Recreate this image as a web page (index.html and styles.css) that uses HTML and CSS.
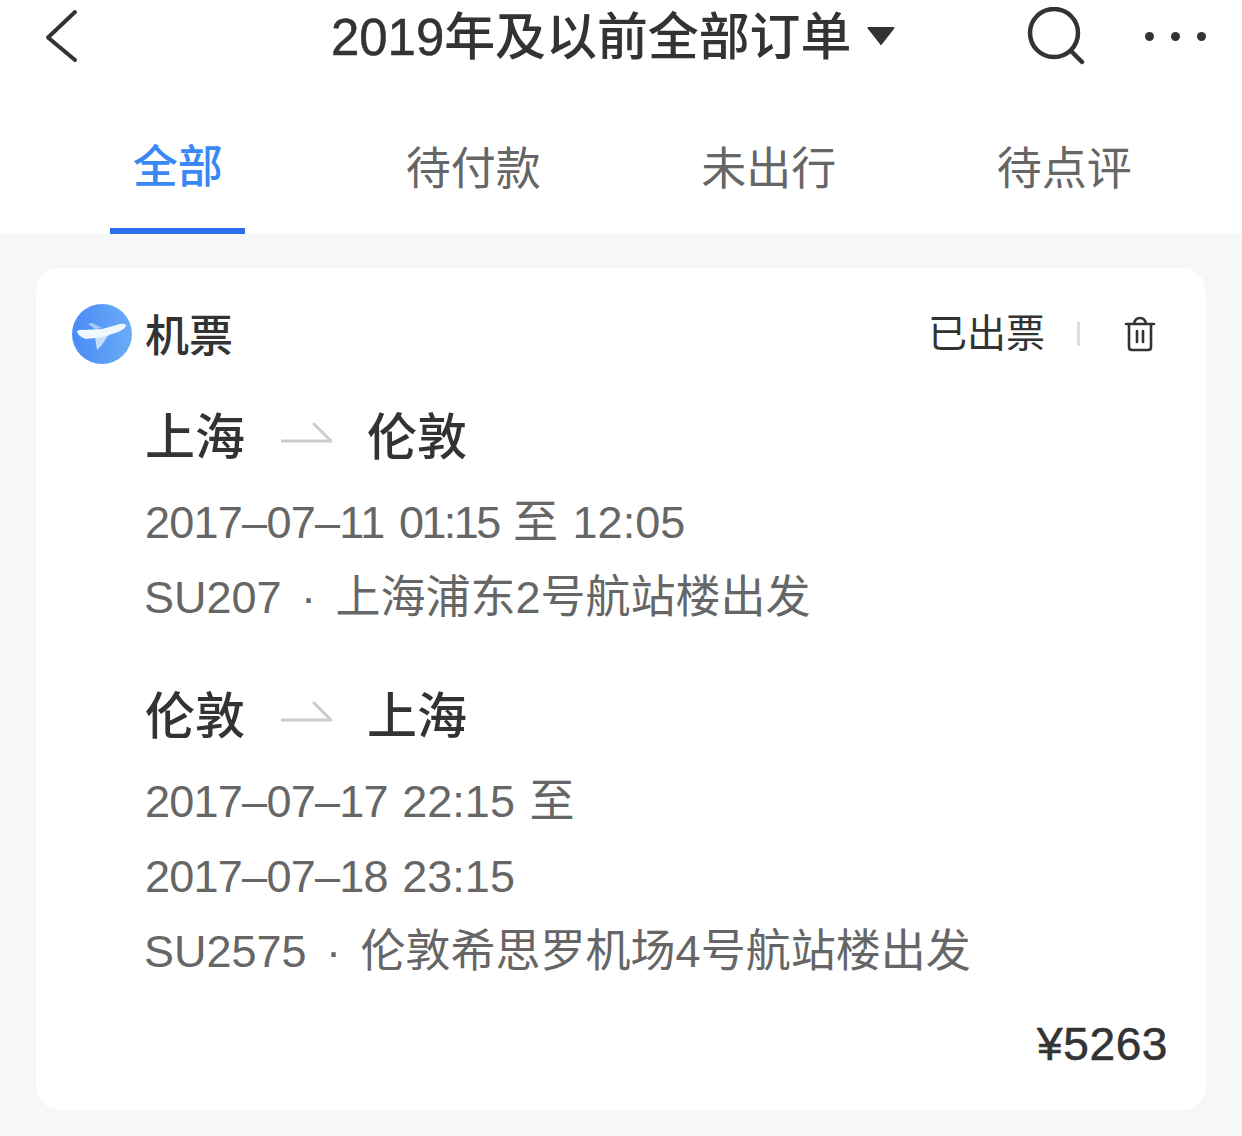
FILE: index.html
```html
<!DOCTYPE html>
<html lang="zh-CN">
<head>
<meta charset="utf-8">
<title>2019年及以前全部订单</title>
<link rel="stylesheet" href="styles.css">
</head>
<body>
<header class="topbar">
  <svg class="icon-back" width="36" height="54" viewBox="0 0 36 54"><path d="M31 3 L4 28.500 L31 51" fill="none" stroke="#333" stroke-width="4" stroke-linecap="round" stroke-linejoin="round"/></svg>
  <div class="title"><span><span class="year">2019</span>年及以前全部订单</span><svg class="caret" width="28" height="18" viewBox="0 0 28 18"><path d="M1.500 1 H26.500 L14 17 Z" fill="#333" stroke="#333" stroke-width="2" stroke-linejoin="round"/></svg></div>
  <svg class="icon-search" width="58" height="58" viewBox="0 0 58 58"><circle cx="27" cy="26" r="24" fill="none" stroke="#333" stroke-width="4.500"/><path d="M44 44 L55 55" stroke="#333" stroke-width="4.500" stroke-linecap="round"/></svg>
  <div class="dots"><i></i><i></i><i></i></div>
</header>
<nav class="tabs">
  <div class="tab active">全部</div>
  <div class="tab">待付款</div>
  <div class="tab">未出行</div>
  <div class="tab">待点评</div>
</nav>
<main class="list">
  <section class="card">
    <div class="card-head">
      <div class="badge">
        <svg width="60" height="60" viewBox="0 0 60 60">
          <defs><linearGradient id="g" x1="0" x2="1" y1="0" y2="0"><stop offset="0" stop-color="#4a8cf7"/><stop offset="1" stop-color="#69acf6"/></linearGradient></defs>
          <circle cx="30" cy="30" r="30" fill="url(#g)"/>
          <path d="M16 20 L20 19 L30 24 L23 25 Z" fill="#a9cbf8"/>
          <path d="M23 33 L37 30 L30 41 L25 46 Z" fill="#c6def9"/>
          <path d="M5 28 Q6 25 12 26 L30 25 L48 20 Q54 19 54 22 Q53 25 46 28 L31 33 L14 35 Q7 33 5 28 Z" fill="#f1f7fe"/>
        </svg>
      </div>
      <h2 class="kind">机票</h2>
      <div class="status">已出票</div>
      <span class="divider"></span>
      <svg class="icon-trash" width="32" height="36" viewBox="0 0 32 36"><path d="M2 8 H30 M5 8 V31 Q5 34 8 34 H24 Q27 34 27 31 V8 M10 8 Q11 2 16 2 Q21 2 22 8 M13 15 V26 M19 15 V26" fill="none" stroke="#333" stroke-width="2.600" stroke-linecap="round" stroke-linejoin="round"/></svg>
    </div>
    <div class="trip">
      <div class="route"><span>上海</span><svg class="arrow" width="52" height="22" viewBox="0 0 52 22"><path d="M1 19 H50 L33 2" fill="none" stroke="#ccc" stroke-width="3" stroke-linecap="round" stroke-linejoin="round"/></svg><span>伦敦</span></div>
      <p class="info"><span class="d">2017–07–11</span> <span class="t-tight">01:15</span> 至 12:05</p>
      <p class="info flight">SU207 · 上海浦东2号航站楼出发</p>
    </div>
    <div class="trip">
      <div class="route"><span>伦敦</span><svg class="arrow" width="52" height="22" viewBox="0 0 52 22"><path d="M1 19 H50 L33 2" fill="none" stroke="#ccc" stroke-width="3" stroke-linecap="round" stroke-linejoin="round"/></svg><span>上海</span></div>
      <p class="info"><span class="d">2017–07–17</span> <span class="t">22:15</span> 至</p>
      <p class="info"><span class="d">2017–07–18</span> <span class="t">23:15</span></p>
      <p class="info flight">SU2575 · 伦敦希思罗机场4号航站楼出发</p>
    </div>
    <div class="price">¥5263</div>
  </section>
</main>
</body>
</html>
```
FILE: styles.css
```css
* { box-sizing: border-box; }
html, body { margin: 0; height: 100%; }
body {
  background: #f7f7f7;
  color: #333;
  font-family: "Liberation Sans", "Noto Sans CJK SC", sans-serif;
  overflow: hidden;
}
.topbar {
  display: flex;
  align-items: center;
  height: 72px;
  padding: 0 35px 0 44px;
  background: #fff;
}
.icon-back { flex: none; }
.title {
  display: flex;
  align-items: center;
  gap: 16px;
  margin-left: 251px;
  margin-top: 4px;
  font-size: 50.900px;
  font-weight: 500;
  line-height: 72px;
  white-space: nowrap;
}
.year { -webkit-text-stroke: 0.5px #333; }
.caret { flex: none; margin-top: -4px; }
.icon-search { flex: none; margin-left: 132px; }
.dots { display: flex; gap: 17px; margin-left: 60px; }
.dots i { width: 9px; height: 9px; border-radius: 50%; background: #333; }
.tabs {
  display: grid;
  grid-template-columns: repeat(4, 1fr);
  height: 162px;
  padding: 0 30px;
  background: #fff;
}
.tab {
  display: flex;
  justify-content: center;
  align-items: center;
  padding-top: 24px;
  position: relative;
  font-size: 45px;
  color: #666;
}
.tab.active { color: #3a88f5; padding-top: 20px; font-weight: 500; }
.tab.active::after {
  content: "";
  position: absolute;
  left: 80px;
  bottom: 0;
  width: 135px;
  height: 6px;
  background: #2f6fee;
}
.list { padding: 34px 36px 0; }
.card {
  height: 842px;
  padding: 36px 38px 0 36px;
  background: #fff;
  border-radius: 24px;
}
.card-head { display: flex; align-items: center; height: 60px; }
.badge { flex: none; width: 60px; height: 60px; }
.badge svg { display: block; }
.kind { margin: 6px 0 0 13px; font-size: 44px; font-weight: 500; line-height: 60px; flex: 1; }
.status { font-size: 39px; line-height: 60px; }
.divider { width: 3px; height: 24px; margin-left: 32px; background: #ddd; }
.icon-trash { margin-left: 44px; margin-right: 12px; }
.trip { padding-left: 73px; }
.trip + .trip { margin-top: 39px; }
.route {
  display: flex;
  align-items: center;
  height: 75px;
  margin-top: 31px;
  margin-bottom: 15px;
  font-size: 50px;
  font-weight: 500;
}
.arrow { margin: 0 34px 0 36px; }
.info {
  margin: 0;
  font-size: 45px;
  line-height: 75px;
  color: #666;
  white-space: nowrap;
  word-spacing: 2px;
}
.d { letter-spacing: -0.75px; }
.t { letter-spacing: 0; }
.t-tight { letter-spacing: -2.600px; }
.flight { word-spacing: 7px; margin-left: -1px; }
.price {
  margin-top: 25px;
  text-align: right;
  font-size: 46px;
  letter-spacing: 0.6px;
  line-height: 60px;
  -webkit-text-stroke: 0.6px #333;
}
```
